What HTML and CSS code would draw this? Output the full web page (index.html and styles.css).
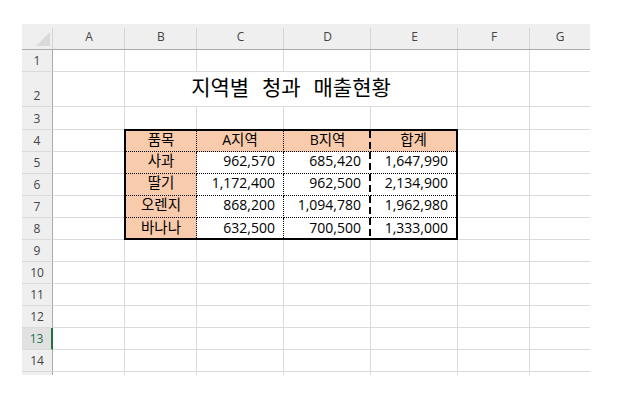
FILE: index.html
```html
<!DOCTYPE html>
<html lang="ko">
<head>
<meta charset="utf-8">
<title>지역별 청과 매출현황</title>
<link rel="stylesheet" href="styles.css">
</head>
<body>
<div class="sheet">
  <div class="corner"><svg width="14" height="14" viewBox="0 0 14 14"><polygon points="14,0 14,14 0,14" fill="#d9d9d9"/></svg></div>
  <div class="ch">A</div><div class="ch">B</div><div class="ch">C</div><div class="ch">D</div><div class="ch">E</div><div class="ch">F</div><div class="ch g">G</div>

  <div class="rh">1</div><div class="c"></div><div class="c"></div><div class="c"></div><div class="c"></div><div class="c"></div><div class="c"></div><div class="c g"></div>

  <div class="rh">2</div><div class="c"></div><div class="title">지역별 청과 매출현황</div><div class="c"></div><div class="c g"></div>

  <div class="rh">3</div><div class="c"></div><div class="c"></div><div class="c"></div><div class="c"></div><div class="c"></div><div class="c"></div><div class="c g"></div>

  <div class="rh">4</div><div class="c"></div><div class="c"></div><div class="c g"></div>
  <div class="rh">5</div><div class="c"></div><div class="c"></div><div class="c g"></div>
  <div class="rh">6</div><div class="c"></div><div class="c"></div><div class="c g"></div>
  <div class="rh">7</div><div class="c"></div><div class="c"></div><div class="c g"></div>
  <div class="rh">8</div><div class="c"></div><div class="c"></div><div class="c g"></div>

  <div class="rh">9</div><div class="c"></div><div class="c"></div><div class="c"></div><div class="c"></div><div class="c"></div><div class="c"></div><div class="c g"></div>
  <div class="rh">10</div><div class="c"></div><div class="c"></div><div class="c"></div><div class="c"></div><div class="c"></div><div class="c"></div><div class="c g"></div>
  <div class="rh">11</div><div class="c"></div><div class="c"></div><div class="c"></div><div class="c"></div><div class="c"></div><div class="c"></div><div class="c g"></div>
  <div class="rh">12</div><div class="c"></div><div class="c"></div><div class="c"></div><div class="c"></div><div class="c"></div><div class="c"></div><div class="c g"></div>
  <div class="rh sel">13</div><div class="c"></div><div class="c"></div><div class="c"></div><div class="c"></div><div class="c"></div><div class="c"></div><div class="c g"></div>
  <div class="rh">14</div><div class="c"></div><div class="c"></div><div class="c"></div><div class="c"></div><div class="c"></div><div class="c"></div><div class="c g"></div>

  <div class="rh tail"></div><div class="c tail"></div><div class="c tail"></div><div class="c tail"></div><div class="c tail"></div><div class="c tail"></div><div class="c tail"></div><div class="c g tail"></div>

  <div class="tbl">
    <div class="t ctr fill r4"><span class="ko">품목</span></div>
    <div class="t ctr fill r4">A<span class="ko">지역</span></div>
    <div class="t ctr fill d r4">B<span class="ko">지역</span></div>
    <div class="t ctr fill e r4"><span class="ko">합계</span></div>

    <div class="t ctr fill"><span class="ko">사과</span></div>
    <div class="t num">962,570</div>
    <div class="t num d">685,420</div>
    <div class="t num e">1,647,990</div>

    <div class="t ctr fill"><span class="ko">딸기</span></div>
    <div class="t num">1,172,400</div>
    <div class="t num d">962,500</div>
    <div class="t num e">2,134,900</div>

    <div class="t ctr fill"><span class="ko">오렌지</span></div>
    <div class="t num">868,200</div>
    <div class="t num d">1,094,780</div>
    <div class="t num e">1,962,980</div>

    <div class="t ctr fill r8"><span class="ko">바나나</span></div>
    <div class="t num r8">632,500</div>
    <div class="t num d r8">700,500</div>
    <div class="t num e r8">1,333,000</div>
  </div>
</div>
</body>
</html>
```
FILE: styles.css
```css
* {
  box-sizing: border-box;
}

body {
  margin: 0;
  background: #ffffff;
}

.sheet {
  display: grid;
  grid-template-columns: 31px 72px 72px 87px 87px 87px 72px 60px;
  grid-template-rows: 26px 22px 35px 23px repeat(11, 22px) 3px;
  width: 568px;
  margin: 24px 0 0 22px;
  font-family: "Open Sans", "Noto Sans CJK KR", sans-serif;
}

.corner {
  display: flex;
  justify-content: flex-end;
  align-items: flex-end;
  padding: 0 3px 3px 0;
  background: linear-gradient(#d5d5d5, #d5d5d5) right 4px / 1px calc(100% - 4px) no-repeat, #efefef;
  border-bottom: 1px solid #ababab;
}

.corner svg {
  display: block;
}

.ch {
  display: flex;
  justify-content: center;
  align-items: center;
  background: linear-gradient(#d5d5d5, #d5d5d5) right 4px / 1px calc(100% - 4px) no-repeat, #efefef;
  border-bottom: 1px solid #ababab;
  font-size: 12px;
  line-height: 14px;
  color: #444444;
}

.ch.g {
  background: #efefef;
}

.rh {
  display: flex;
  justify-content: center;
  align-items: flex-end;
  padding-bottom: 3px;
  background: #efefef;
  border-right: 1px solid #ababab;
  border-bottom: 1px solid #dadada;
  font-size: 12px;
  line-height: 14px;
  color: #444444;
}

.rh.sel {
  background: #e1e1e1;
  color: #217346;
  border-right: 2px solid #217346;
}

.rh.tail {
  border-bottom: none;
  padding: 0;
}

.c {
  border-right: 1px solid #dadada;
  border-bottom: 1px solid #dadada;
}

.c.g {
  border-right: none;
}

.c.tail {
  border-bottom: none;
}

.title {
  grid-column: span 4;
  display: flex;
  justify-content: center;
  align-items: flex-end;
  padding-bottom: 9px;
  border-right: 1px solid #dadada;
  border-bottom: 1px solid #dadada;
  font-family: "Noto Sans CJK KR", sans-serif;
  font-size: 21px;
  line-height: 21px;
  word-spacing: 7px;
  color: #000000;
  white-space: nowrap;
}

.tbl {
  grid-column: 3 / 7;
  grid-row: 5 / 10;
  margin: -1px 0 0 -1px;
  border: 2px solid #000000;
  display: grid;
  grid-template-columns: 71px 87px 87px 85px;
  grid-template-rows: 21px 22px 22px 22px 20px;
  font-size: 14px;
  line-height: 16px;
  color: #000000;
}

.ko {
  font-size: 14.5px;
}

.t {
  display: flex;
  align-items: flex-end;
  padding-bottom: 4px;
  border-right: 1px dotted #000000;
  border-bottom: 1px dotted #000000;
  white-space: nowrap;
}

.t.ctr {
  justify-content: center;
}

.t.num {
  justify-content: flex-end;
  padding-right: 8px;
}

.t.fill {
  background-color: #f8cbad;
}

.t.d {
  border-right: none;
  background-image: repeating-linear-gradient(to bottom, #000000 0 7px, transparent 7px 11px);
  background-size: 2px 100%;
  background-position: right top;
  background-repeat: no-repeat;
}

.t.num.d {
  padding-right: 10px;
}

.t.e {
  border-right: none;
}

.t.r4 {
  padding-bottom: 3px;
}

.t.r8 {
  border-bottom: none;
  padding-bottom: 2px;
}
```
